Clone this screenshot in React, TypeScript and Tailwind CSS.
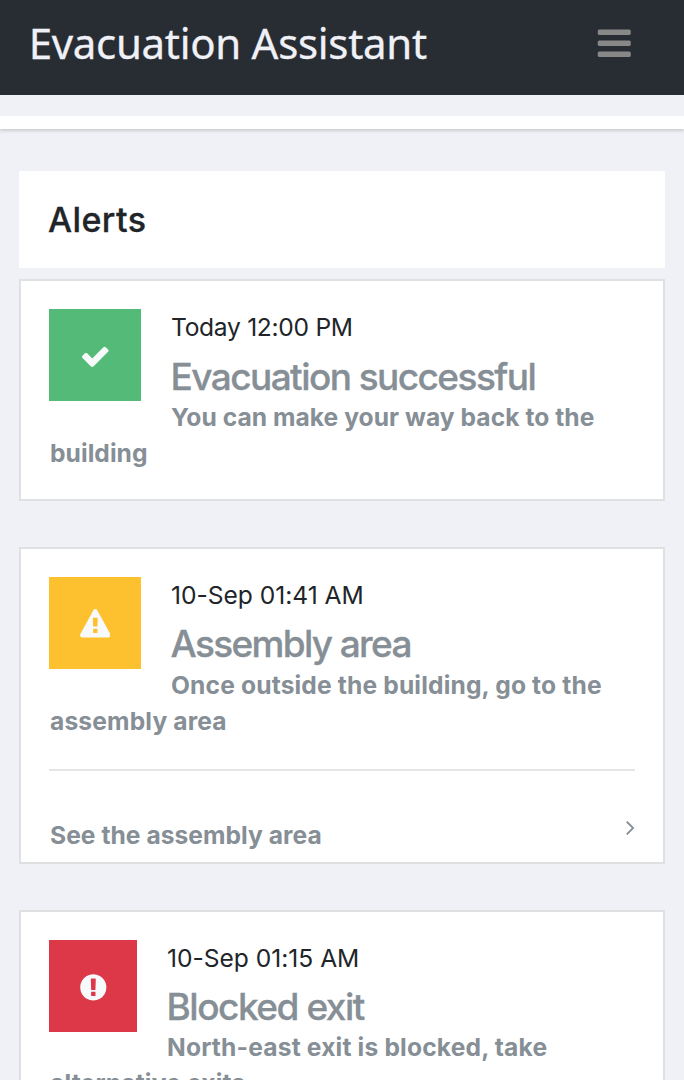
import type { ReactNode } from 'react';

function FaIcon({ d, className }: { d: string; className: string }) {
  return (
    <svg viewBox="0 0 1792 1792" fill="currentColor" aria-hidden="true" className={className}>
      <path d={d} />
    </svg>
  );
}

const CHECK =
  'M1671 566q0 40-28 68l-724 724-136 136q-28 28-68 28t-68-28l-136-136-362-362q-28-28-28-68t28-68l136-136q28-28 68-28t68 28l294 295 656-657q28-28 68-28t68 28l136 136q28 28 28 68z';
const WARNING =
  'M1024 1375v-190q0-14-9.5-23.5t-22.5-9.5h-192q-13 0-22.5 9.5t-9.5 23.5v190q0 14 9.5 23.5t22.5 9.5h192q13 0 22.5-9.5t9.5-23.5zm-2-374l18-459q0-12-10-19-13-11-24-11h-220q-11 0-24 11-10 7-10 21l17 457q0 10 10 16.5t24 6.5h185q14 0 23.5-6.5t10.5-16.5zm-14-934l768 1408q35 63-2 126-17 29-46.5 46t-63.5 17h-1536q-34 0-63.5-17t-46.5-46q-37-63-2-126l768-1408q17-31 47-49t65-18 65 18 47 49z';
const EXCLAMATION =
  'M896 128q209 0 385.5 103t279.5 279.5 103 385.5-103 385.5-279.5 279.5-385.5 103-385.5-103-279.5-279.5-103-385.5 103-385.5 279.5-279.5 385.5-103zm128 1247v-190q0-14-9-23.5t-22-9.5h-192q-13 0-23 10t-10 23v190q0 13 10 23t23 10h192q13 0 22-9.5t9-23.5zm-2-344l18-621q0-12-10-18-10-8-24-8h-220q-14 0-24 8-10 6-10 18l17 621q0 10 10 17.5t24 7.5h185q14 0 23.5-7.5t10.5-17.5z';
const BARS =
  'M1664 1344v128q0 26-19 45t-45 19h-1408q-26 0-45-19t-19-45v-128q0-26 19-45t45-19h1408q26 0 45 19t19 45zm0-512v128q0 26-19 45t-45 19h-1408q-26 0-45-19t-19-45v-128q0-26 19-45t45-19h1408q26 0 45 19t19 45zm0-512v128q0 26-19 45t-45 19h-1408q-26 0-45-19t-19-45v-128q0-26 19-45t45-19h1408q26 0 45 19t19 45z';

interface AlertProps {
  icon: string;
  tile: string;
  time: string;
  timeClass: string;
  title: string;
  titleClass: string;
  text: string;
  textClass: string;
  children?: ReactNode;
}

function AlertCard({ icon, tile, time, timeClass, title, titleClass, text, textClass, children }: AlertProps) {
  return (
    <article className="border-2 border-[#dfe0e2] bg-white px-7 pt-7">
      <div className={`float-left mr-[30px] flex h-23 items-center justify-center pt-0.5 text-[#f8f9fa] ${tile}`}>
        <FaIcon d={icon} className="size-[30.6px]" />
      </div>
      <p className={`text-[24.6px] leading-9 text-[#212529] ${timeClass}`}>{time}</p>
      <h2 className={`text-[37px] leading-[45px] font-medium text-[#868e96] ${titleClass}`}>{title}</h2>
      <p className={`pl-px text-[24.6px] leading-9 font-bold text-[#868e96] ${textClass}`}>{text}</p>
      {children}
    </article>
  );
}

export default function App() {
  return (
    <div className="h-[1080px] overflow-hidden bg-[#f0f1f7] font-['Inter',sans-serif]">
      <header className="flex h-[95px] items-start justify-between bg-[#282c33] pr-[51px] pl-[28.7px]">
        <h1 className="pt-[13px] font-['Noto_Sans',sans-serif] text-[42px] leading-[60px] tracking-[-0.3px] text-[#f0f1f7] [-webkit-text-stroke:0.3px]">
          Evacuation Assistant
        </h1>
        <button type="button" aria-label="Menu" className="mt-[24px] text-[#888888]">
          <FaIcon d={BARS} className="block size-[38.5px]" />
        </button>
      </header>
      <div className="mt-[21px] h-[13px] bg-white shadow-[0_2px_3px_rgba(0,0,0,0.15)]" />
      <main className="mt-[42px] px-[19px]">
        <div className="mb-[11px] h-[97px] bg-white pt-[29px] pl-[29px]">
          <h2 className="text-[34px] leading-10 font-medium tracking-[0.4px] text-[#212529] [-webkit-text-stroke:0.3px]">Alerts</h2>
        </div>
        <div className="flex flex-col gap-[46px]">
          <AlertCard
            icon={CHECK}
            tile="w-23 bg-[#53bb77]"
            time="Today 12:00 PM"
            timeClass="tracking-[-0.3px]"
            title="Evacuation successful"
            titleClass="mt-[9px] tracking-[-1.56px] indent-[-0.5px] [-webkit-text-stroke:0.3px]"
            text="You can make your way back to the building"
            textClass="tracking-[0.05px] pb-7"
          />
          <AlertCard
            icon={WARNING}
            tile="w-23 bg-[#fdc12f]"
            time="10-Sep 01:41 AM"
            timeClass="tracking-[-0.02px]"
            title="Assembly area"
            titleClass="mt-2 tracking-[-1.66px] indent-[-0.5px] [-webkit-text-stroke:0.3px]"
            text="Once outside the building, go to the assembly area"
            textClass="mt-px tracking-[0.15px]"
          >
            <a href="#assembly" className="mt-[30px] flex items-start justify-between border-t-2 border-[#e5e5e5] pt-[46px] pb-[9px] text-[#868e96]">
              <span className="pl-px text-[24.6px] leading-9 font-bold tracking-[0.04px]">See the assembly area</span>
              <svg viewBox="571 448 600 1024" fill="currentColor" aria-hidden="true" className="mt-[4.4px] mr-[0.5px] h-[14.1px] w-[8.3px]">
                <path d="M1171 960q0 13-10 23l-466 466q-10 10-23 10t-23-10l-50-50q-10-10-10-23t10-23l393-393-393-393q-10-10-10-23t10-23l50-50q10-10 23-10t23 10l466 466q10 10 10 23z" />
              </svg>
            </a>
          </AlertCard>
          <AlertCard
            icon={EXCLAMATION}
            tile="w-[88px] bg-[#dc3848]"
            time="10-Sep 01:15 AM"
            timeClass="tracking-[-0.02px]"
            title="Blocked exit"
            titleClass="mt-2 tracking-[-1.47px] indent-[-0.5px] [-webkit-text-stroke:0.3px]"
            text="North-east exit is blocked, take alternative exits"
            textClass="tracking-[0.17px] pb-7"
          />
        </div>
      </main>
    </div>
  );
}
